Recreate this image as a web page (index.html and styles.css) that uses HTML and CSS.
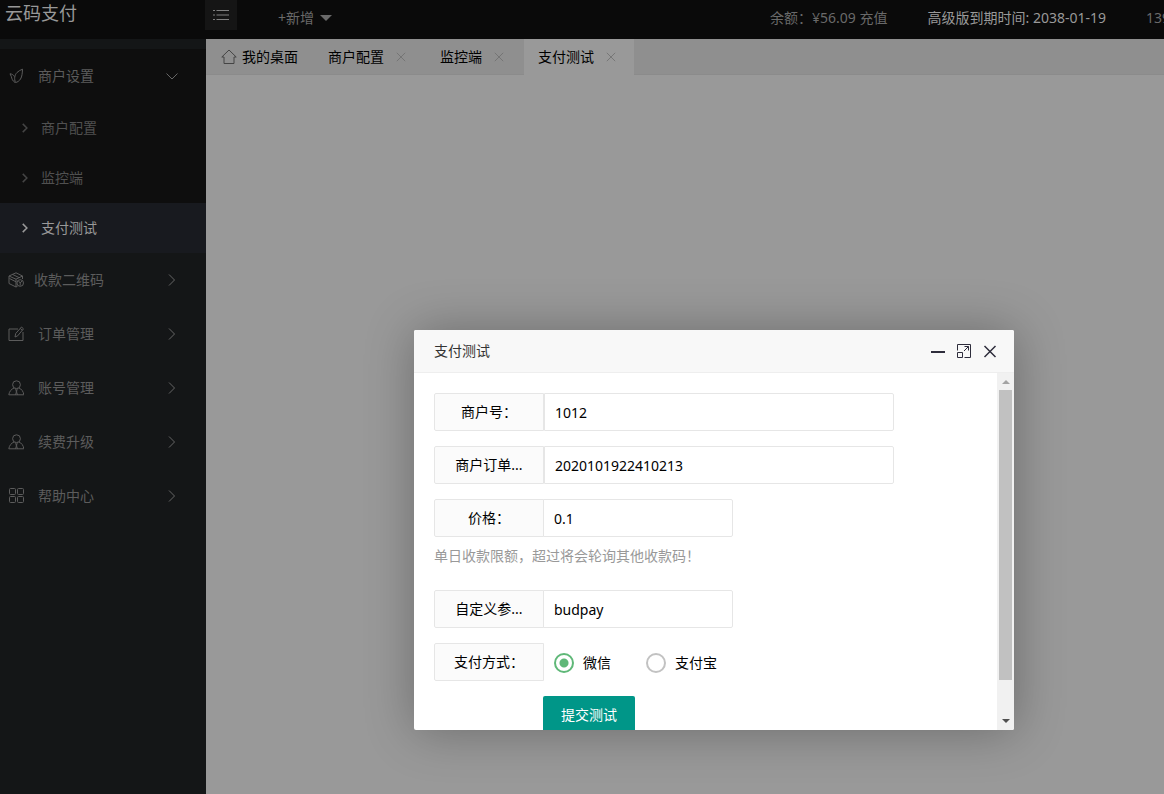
FILE: index.html
```html
<!DOCTYPE html>
<html lang="zh-CN">
<head>
<meta charset="utf-8">
<title>云码支付</title>
<link rel="stylesheet" href="styles.css">
</head>
<body>
<svg class="sprite" aria-hidden="true">
  <symbol id="i-right" viewBox="0 0 16 16"><path d="M5 2.500 10.500 8 5 13.500"/></symbol>
  <symbol id="i-down" viewBox="0 0 16 16"><path d="M2.500 5.500 8 11l5.500-5.500"/></symbol>
  <symbol id="i-close" viewBox="0 0 12 12"><path d="m1 1 10 10M11 1 1 11"/></symbol>
  <symbol id="i-user" viewBox="0 0 16 16"><circle cx="8.500" cy="4.700" r="3.900"/><path d="M6 8C3.500 9 1.200 11.500.8 14.800h15C15.500 11.500 13.500 9 11 8M7 8.500c1.500 1.500 1.800 3.500.5 6.300M9.800 8.500c-1.500 1.500-1.600 3.500-.3 6.300"/></symbol>
</svg>
<div class="app">
  <header class="header">
    <a class="logo" href="#">云码支付</a>
    <button class="toggle" type="button" aria-label="菜单">
      <svg class="icon" viewBox="0 0 16 12"><path d="M3.500 1.500H16M3.500 6H16M3.500 10.500H16M0 1.500h2M0 6h2M0 10.500h2"/></svg>
    </button>
    <a class="add" href="#">+新增 <span class="caret"></span></a>
    <nav class="header-nav">
      <a href="#">余额：¥56.09 充值</a>
      <a class="bright" href="#">高级版到期时间: 2038-01-19</a>
      <a class="account" href="#">139</a>
    </nav>
  </header>
  <div class="main">
    <aside class="sidebar">
      <nav>
        <div class="group">
          <a class="item" href="#"><svg class="icon" viewBox="0 0 16 16"><path d="M7.500 14.500C6 11 6.500 7 9 4.500 10.500 3 12.500 2 14.500 1.200c-.2 4-.4 7.300-2 9.800-1.300 2-3 3.200-5 3.500ZM7 14.500C4.500 13 3.800 10.500 3.300 8.500L2 5.800C4.200 6 5.500 7 6.300 8.500"/></svg><span class="item-text">商户设置</span><svg class="arrow"><use href="#i-down"/></svg></a>
          <a class="sub" href="#"><svg class="sub-arrow"><use href="#i-right"/></svg>商户配置</a>
          <a class="sub" href="#"><svg class="sub-arrow"><use href="#i-right"/></svg>监控端</a>
          <a class="sub active" href="#"><svg class="sub-arrow"><use href="#i-right"/></svg>支付测试</a>
        </div>
        <a class="item tight" href="#"><svg class="icon" viewBox="0 0 16 16"><path d="M14.500 7V4L8 .8 1 4v7.500L8 15l1.500-.7M1 4l7 3.200L14.500 4M8 7.200V15M4.500 2.400l6.500 3.200M1.500 6.500 8 9.800"/><circle cx="12.200" cy="11" r="3.300"/><path d="m10.500 9 1.700 2 1.700-2M12.200 11v2.500"/></svg><span class="item-text">收款二维码</span><svg class="arrow"><use href="#i-right"/></svg></a>
        <a class="item" href="#"><svg class="icon" viewBox="0 0 16 16"><path d="M10 3H1v11.500h14V6M7 11l.7-3.500L13.500 1l2 1.800-5.800 7ZM12.300 2.500l2 1.800"/></svg><span class="item-text">订单管理</span><svg class="arrow"><use href="#i-right"/></svg></a>
        <a class="item" href="#"><svg class="icon"><use href="#i-user"/></svg><span class="item-text">账号管理</span><svg class="arrow"><use href="#i-right"/></svg></a>
        <a class="item" href="#"><svg class="icon"><use href="#i-user"/></svg><span class="item-text">续费升级</span><svg class="arrow"><use href="#i-right"/></svg></a>
        <a class="item" href="#"><svg class="icon" viewBox="0 0 16 16"><rect x="1.500" y=".5" width="6" height="6" rx="1"/><rect x="9.500" y=".5" width="6" height="6" rx="1"/><rect x="1.500" y="8.500" width="6" height="6" rx="1"/><rect x="9.500" y="8.500" width="6" height="6" rx="1"/></svg><span class="item-text">帮助中心</span><svg class="arrow"><use href="#i-right"/></svg></a>
      </nav>
    </aside>
    <main class="content">
      <div class="tabs">
        <div class="tab home"><svg class="icon" viewBox="0 0 16 16"><path d="M.8 8 8 1l7.200 7H13v6.500H3V8Z"/></svg><span>我的桌面</span></div>
        <div class="tab"><span>商户配置</span><button class="tab-close" type="button" aria-label="关闭"><svg><use href="#i-close"/></svg></button></div>
        <div class="tab"><span>监控端</span><button class="tab-close" type="button" aria-label="关闭"><svg><use href="#i-close"/></svg></button></div>
        <div class="tab current"><span>支付测试</span><button class="tab-close" type="button" aria-label="关闭"><svg><use href="#i-close"/></svg></button></div>
      </div>
    </main>
  </div>
</div>

<section class="dialog" role="dialog" aria-labelledby="dialog-title">
  <div class="dialog-head">
    <h1 class="dialog-title" id="dialog-title">支付测试</h1>
    <button class="tool" type="button" aria-label="最小化"><svg viewBox="0 0 16 16"><path class="thick" d="M1 9h14"/></svg></button>
    <button class="tool" type="button" aria-label="最大化"><svg viewBox="0 0 16 16"><path d="M1.500 7.500v-6h13v13h-6M1.500 9.500h5v5h-5ZM8 8l4.500-4.500M8.500 3.500h4v4"/></svg></button>
    <button class="tool" type="button" aria-label="关闭"><svg viewBox="0 0 16 16"><path class="cross" d="m2.500 3 11 11M13.500 3l-11 11"/></svg></button>
  </div>
  <div class="dialog-body">
    <form class="form">
      <div class="row"><label class="label" for="mch">商户号：</label><input class="input wide" id="mch" type="text" value="1012"></div>
      <div class="row"><label class="label" for="order">商户订单...</label><input class="input wide" id="order" type="text" value="2020101922410213"></div>
      <div class="row joined"><label class="label" for="price">价格：</label><input class="input" id="price" type="text" value="0.1"></div>
      <p class="hint">单日收款限额，超过将会轮询其他收款码！</p>
      <div class="row"><label class="label" for="param">自定义参...</label><input class="input" id="param" type="text" value="budpay"></div>
      <div class="row" role="radiogroup" aria-labelledby="pay"><span class="label" id="pay">支付方式：</span>
        <label class="choice"><input class="radio" type="radio" name="pay" checked>微信</label>
        <label class="choice"><input class="radio" type="radio" name="pay">支付宝</label>
      </div>
      <button class="submit" type="button">提交测试</button>
    </form>
    <div class="scrollbar" aria-hidden="true"><span class="up"></span><span class="thumb"></span><span class="down"></span></div>
  </div>
</section>
</body>
</html>
```

FILE: styles.css
```css
* { box-sizing: border-box; }

body {
  margin: 0;
  overflow: hidden;
  background: #999;
  color: #000;
  font: 14px/20px "Noto Sans", "Noto Sans CJK SC", sans-serif;
}

a { color: inherit; text-decoration: none; }
button { padding: 0; border: 0; background: none; color: inherit; font: inherit; cursor: pointer; }
svg { flex: none; fill: none; stroke: currentColor; stroke-width: 1; }
.sprite { position: absolute; width: 0; height: 0; }
.icon { width: 16px; height: 16px; }

.app { display: flex; flex-direction: column; min-height: 100vh; }

/* Header */
.header {
  display: flex;
  align-items: flex-start;
  height: 39px;
  background: #0a0a0a;
  color: #696969;
  white-space: nowrap;
}
.logo { width: 205px; padding: 2px 5px; color: #989898; font-size: 18px; line-height: 22px; }
.toggle { display: flex; align-items: center; justify-content: center; width: 32px; height: 30px; background: #151515; color: #808080; }
.toggle .icon { height: 12px; }
.add { display: flex; align-items: center; gap: 6px; margin-left: 41px; padding: 8px 0; }
.caret { border: 6px solid transparent; border-top-color: #696969; border-bottom: 0; }
.header-nav { display: flex; gap: 40px; margin-left: auto; padding: 8px 0; }
.bright { color: #999; }
.account { width: 18px; overflow: hidden; }

/* Sidebar */
.main { display: flex; flex: 1; }
.sidebar { width: 206px; padding-top: 10px; background: #141617; color: #5c5c5c; }
.group { background: #0e0e0e; }
.item { display: flex; align-items: center; gap: 14px; height: 54px; padding: 0 26px 0 8px; }
.item.tight { gap: 10px; }
.item-text { flex: 1; }
.arrow { width: 16px; height: 16px; color: #666; }
.sub { display: flex; align-items: center; gap: 10px; height: 50px; padding-left: 19px; color: #505050; }
.sub-arrow { width: 12px; height: 12px; color: #444; stroke-width: 2; }
.sub.active { background: #181a1f; color: #999; }
.active .sub-arrow { color: #999; }

/* Tabs */
.content { flex: 1; background: #999; }
.tabs { display: flex; gap: 2px; height: 36px; border-bottom: 1px solid #8b8b8b; background: #8f8f8f; }
.tab { display: flex; align-items: center; gap: 12px; height: 36px; padding: 0 18px 0 14px; }
.tab.home { gap: 5px; padding: 0 14px 0 15px; }
.home .icon { color: #444; }
.tab.current { background: #999; }
.tab-close { width: 10px; height: 10px; color: #707070; }
.tab-close svg { display: block; width: 10px; height: 10px; }

/* Dialog */
.dialog {
  position: absolute;
  top: 330px;
  left: 414px;
  display: flex;
  flex-direction: column;
  width: 600px;
  height: 400px;
  border-radius: 2px;
  overflow: hidden;
  background: #fff;
  box-shadow: 1px 1px 50px rgba(0, 0, 0, .3);
}
.dialog-head { display: flex; align-items: center; gap: 10px; height: 43px; padding: 0 16px 0 20px; border-bottom: 1px solid #eee; background: #f8f8f8; color: #333; }
.dialog-title { flex: 1; margin: 0; font-size: 14px; font-weight: 400; }
.tool, .tool svg { display: block; width: 16px; height: 16px; color: #2e2d3c; }
.thick { stroke-width: 2; }
.cross { stroke-width: 1.5; }
.dialog-body { display: flex; flex: 1; min-height: 0; overflow: hidden; }
.form { flex: 1; padding: 20px; }
.row { display: flex; height: 38px; margin-bottom: 15px; }
.row.joined { margin-bottom: 0; }
.label { flex: none; width: 110px; padding: 8px 0; border: 1px solid #e6e6e6; border-radius: 2px 0 0 2px; background: #fbfbfb; text-align: center; }
.input { width: 190px; height: 38px; margin: 0 0 0 -1px; padding: 0 10px; border: 1px solid #e6e6e6; border-radius: 0 2px 2px 0; background: #fff; color: #000; font: inherit; }
.input.wide { width: 350px; margin-left: 0; }
.hint { margin: 0 0 15px; padding: 9px 0; color: #999; }
.choice { display: flex; align-items: center; gap: 9px; margin: 0 25px 0 10px; padding-top: 2px; }
.radio { appearance: none; width: 20px; height: 20px; margin: 0; border: 2px solid #c2c2c2; border-radius: 50%; }
.radio:checked { border-color: #5fb878; background: radial-gradient(circle, #5fb878 4px, transparent 5px); }
.submit { display: block; width: 92px; height: 38px; margin-left: 109px; border-radius: 2px; background: #009688; color: #fff; }

.scrollbar { display: flex; flex-direction: column; align-items: center; width: 17px; padding: 7px 0; background: #f1f1f1; }
.up { border: 4px solid transparent; border-top: 0; border-bottom-color: #a3a3a3; }
.thumb { width: 13px; height: 290px; margin-top: 6px; background: #c1c1c1; }
.down { margin-top: auto; border: 4px solid transparent; border-bottom: 0; border-top-color: #505050; }
```
